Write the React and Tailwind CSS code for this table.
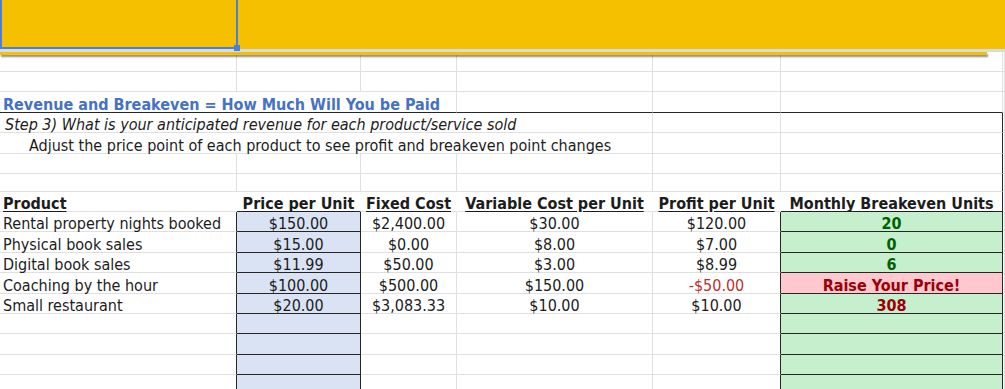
import React from 'react';

const GRID_R = 'border-r-[#e0e0e0]';
const GRID_B = 'border-b-[#e0e0e0]';
const INK_R = 'border-r-[#262626]';
const INK_B = 'border-b-[#262626]';

const products = [
    { name: 'Rental property nights booked', price: '$150.00', fixed: '$2,400.00', variable: '$30.00', profit: '$120.00', units: '20', tone: 'good' },
    { name: 'Physical book sales', price: '$15.00', fixed: '$0.00', variable: '$8.00', profit: '$7.00', units: '0', tone: 'good' },
    { name: 'Digital book sales', price: '$11.99', fixed: '$50.00', variable: '$3.00', profit: '$8.99', units: '6', tone: 'good' },
    { name: 'Coaching by the hour', price: '$100.00', fixed: '$500.00', variable: '$150.00', profit: '-$50.00', units: 'Raise Your Price!', tone: 'bad' },
    { name: 'Small restaurant', price: '$20.00', fixed: '$3,083.33', variable: '$10.00', profit: '$10.00', units: '308', tone: 'warn' },
    { name: '', tone: 'empty' },
    { name: '', tone: 'empty' },
    { name: '', tone: 'empty' },
    { name: '', tone: 'empty' },
];

const rowHeights = ['h-[20px]', 'h-[21px]', 'h-[20px]', 'h-[21px]', 'h-[20px]', 'h-[20px]', 'h-[21px]', 'h-[20px]', 'h-[20px]'];

const Cell = ({ w, r = GRID_R, b = GRID_B, bg = '', align = 'justify-center', extra = '', children }) => (
    <div className={`${w} shrink-0 flex items-end ${align} border-r border-b ${r} ${b} ${bg} ${extra} whitespace-nowrap leading-[14px]`}>
        {children}
    </div>
);

// plain empty row with every gridline showing
const BlankRow = ({ h }) => (
    <div className={`flex ${h}`}>
        <Cell w="w-[237px]" />
        <Cell w="w-[124px]" />
        <Cell w="w-[96px]" />
        <Cell w="w-[196px]" />
        <Cell w="w-[128px]" />
        <Cell w="w-[222px]" />
        <Cell w="flex-1" />
    </div>
);

const unitStyles = {
    good: 'bg-[#c6efce] text-[#006100] font-bold',
    warn: 'bg-[#c6efce] text-[#9c0006] font-bold',
    bad: 'bg-[#ffc7ce] text-[#9c0006] font-bold',
    empty: 'bg-[#c6efce]',
};

export default function App() {
    return (
        <div className="w-[1005px] h-[389px] overflow-hidden bg-white text-[16px] text-[#1c1c1c] font-['DejaVu_Sans_Condensed','DejaVu_Sans',sans-serif]">

            {/* Banner row with the selected cell */}
            <div className="relative h-[49px] bg-[#f5c000]">
                <div className="absolute left-0 top-0 w-[238px] h-[49px] border-l-2 border-r-2 border-b-2 border-[#4a7ee0]" />
                <div className="absolute left-[234px] top-[45px] w-[6px] h-[6px] bg-[#4a7ee0]" />
            </div>
            {/* frozen pane split */}
            <div className="h-[3px] bg-[#d6dce5]" />

            <div className="relative">
                <div className="absolute left-0 top-0 w-[987px] h-[3px] bg-[#f5c000] shadow-[1px_2px_2px_rgba(0,0,0,0.45)]" />
                <BlankRow h="h-[20px]" />
            </div>
            <BlankRow h="h-[20px]" />

            {/* Section title */}
            <div className="flex h-[21px]">
                <Cell w="w-[457px]" b={INK_B} align="justify-start" extra="pl-[3px] text-[#4472c4] font-bold">
                    Revenue and Breakeven = How Much Will You be Paid
                </Cell>
                <Cell w="w-[196px]" b={INK_B} />
                <Cell w="w-[128px]" b={INK_B} />
                <Cell w="w-[222px]" b={INK_B} />
                <Cell w="flex-1" />
            </div>

            <div className="flex h-[20px]">
                <Cell w="w-[653px]" align="justify-start" extra="pl-[5px] italic">
                    Step 3) What is your anticipated revenue for each product/service sold
                </Cell>
                <Cell w="w-[128px]" />
                <Cell w="w-[222px]" r={INK_R} />
                <Cell w="flex-1" />
            </div>

            <div className="flex h-[21px]">
                <Cell w="w-[653px]" align="justify-start" extra="pl-[29px]">
                    Adjust the price point of each product to see profit and breakeven point changes
                </Cell>
                <Cell w="w-[128px]" />
                <Cell w="w-[222px]" r={INK_R} />
                <Cell w="flex-1" />
            </div>

            {[['h-[20px]'], ['h-[18px]']].map(([h]) => (
                <div key={h} className={`flex ${h}`}>
                    <Cell w="w-[237px]" />
                    <Cell w="w-[124px]" />
                    <Cell w="w-[96px]" />
                    <Cell w="w-[196px]" />
                    <Cell w="w-[128px]" />
                    <Cell w="w-[222px]" r={INK_R} />
                    <Cell w="flex-1" />
                </div>
            ))}

            {/* Column headings */}
            <div className="flex h-[20px] font-bold">
                <Cell w="w-[237px]" r="border-r-white" align="justify-start" extra="pl-[3px]">
                    <span className="underline underline-offset-[2px]">Product</span>
                </Cell>
                <Cell w="w-[124px]" r="border-r-white" b={INK_B}>
                    <span className="underline underline-offset-[2px]">Price per Unit</span>
                </Cell>
                <Cell w="w-[96px]" r="border-r-white">
                    <span className="underline underline-offset-[2px]">Fixed Cost</span>
                </Cell>
                <Cell w="w-[196px]" r="border-r-white">
                    <span className="underline underline-offset-[2px]">Variable Cost per Unit</span>
                </Cell>
                <Cell w="w-[128px]" r="border-r-white">
                    <span className="underline underline-offset-[2px]">Profit per Unit</span>
                </Cell>
                <Cell w="w-[222px]" r={INK_R} b={INK_B}>
                    <span className="underline underline-offset-[2px]">Monthly Breakeven Units</span>
                </Cell>
                <Cell w="flex-1" />
            </div>

            {/* Product rows */}
            {products.map((p, i) => (
                <div key={i} className={`flex ${rowHeights[i]}`}>
                    <Cell w="w-[237px]" r={INK_R} align="justify-start" extra="pl-[3px]">{p.name}</Cell>
                    <Cell w="w-[124px]" r={INK_R} b={INK_B} bg="bg-[#dae3f3]">{p.price}</Cell>
                    <Cell w="w-[96px]">{p.fixed}</Cell>
                    <Cell w="w-[196px]">{p.variable}</Cell>
                    <Cell w="w-[128px]" r={INK_R} extra={p.tone === 'bad' ? 'text-[#c0302c]' : ''}>{p.profit}</Cell>
                    <Cell w="w-[222px]" r={INK_R} b={INK_B} bg={unitStyles[p.tone]}>{p.units}</Cell>
                    <Cell w="flex-1" />
                </div>
            ))}
        </div>
    );
}
